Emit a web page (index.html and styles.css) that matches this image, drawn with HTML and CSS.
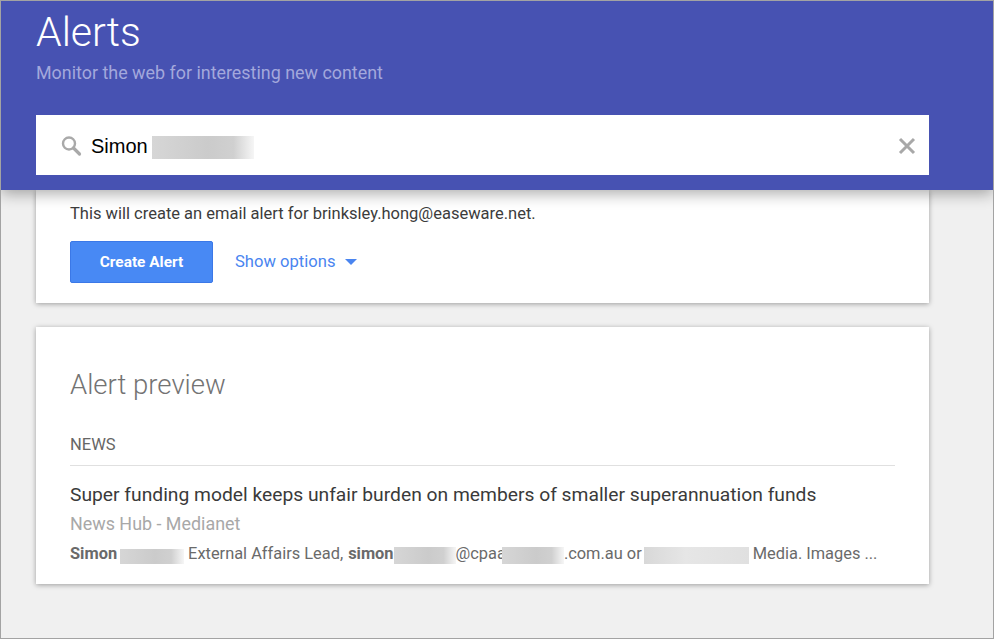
FILE: index.html
```html
<!DOCTYPE html>
<html lang="en">
<head>
<meta charset="utf-8">
<title>Alerts</title>
<link rel="stylesheet" href="styles.css">
</head>
<body>
<div class="window">
  <header class="header">
    <h1 class="title">Alerts</h1>
    <p class="subtitle">Monitor the web for interesting new content</p>
    <div class="search">
      <svg class="search-icon" width="22" height="22" viewBox="0 0 22 22" aria-hidden="true">
        <circle cx="9" cy="8.5" r="6" fill="none" stroke="#a9a9a9" stroke-width="2.4"/>
        <path d="M13.5 13l6 6" fill="none" stroke="#a9a9a9" stroke-width="3.2" stroke-linecap="round"/>
      </svg>
      <span class="query">Simon</span>
      <span class="redact redact-query"></span>
      <svg class="clear-icon" width="18" height="18" viewBox="0 0 18 18" aria-hidden="true">
        <path d="M2 2l14 14M16 2L2 16" fill="none" stroke="#a8a8a8" stroke-width="3"/>
      </svg>
    </div>
  </header>
  <main class="content">
    <section class="card card-create">
      <p class="notice">This will create an email alert for brinksley.hong@easeware.net.</p>
      <div class="actions">
        <button class="create-btn" type="button">Create Alert</button>
        <a class="options-link">Show options<span class="caret"></span></a>
      </div>
    </section>
    <section class="card card-preview">
      <h2 class="preview-title">Alert preview</h2>
      <div class="section-label">NEWS</div>
      <div class="headline">Super funding model keeps unfair burden on members of smaller superannuation funds</div>
      <div class="source">News Hub - Medianet</div>
      <div class="snippet"><b>Simon</b><span class="redact r1"></span><span class="t1">External Affairs Lead,</span><b class="b2">simon</b><span class="redact r2"></span><span>@cpaa</span><span class="redact r3"></span><span>.com.au or</span><span class="redact r4"></span><span>Media. Images ...</span></div>
    </section>
  </main>
</div>
</body>
</html>
```

FILE: styles.css
```css
* { box-sizing: border-box; }
html, body { margin: 0; padding: 0; }
body { font-family: Roboto, "Liberation Sans", sans-serif; background: #f0f0f0; }
.window {
  width: 994px;
  height: 639px;
  border: 1px solid #a3a3a3;
  background: #f0f0f0;
  overflow: hidden;
  position: relative;
}
.header {
  position: relative;
  z-index: 2;
  height: 189px;
  background: #4752b2;
  padding: 0 64px 0 35px;
  box-shadow: 0 4px 14px rgba(0, 0, 0, .32);
}
.title {
  margin: 0;
  padding-top: 8px;
  font-size: 41px;
  line-height: 46px;
  font-weight: 300;
  color: #fff;
}
.subtitle {
  margin: 6px 0 0;
  font-size: 17.9px;
  line-height: 24px;
  color: #a3a8dc;
}
.search {
  display: flex;
  align-items: center;
  height: 60px;
  width: 893px;
  margin-top: 30px;
  padding: 0 13px 0 24px;
  background: #fff;
}
.search-icon { flex: none; margin-top: 2px; }
.query {
  margin-left: 9px;
  padding-top: 2px;
  font-family: "Liberation Sans", Arial, sans-serif;
  font-size: 20px;
  color: #000;
}
.redact {
  display: inline-block;
  flex: none;
  background: linear-gradient(90deg, #d6d6d6, #cbcbcb 55%, #d0d0d0 80%, #f6f6f6);
}
.redact-query { width: 102px; height: 23px; margin: 5px 0 0 4px; }
.clear-icon { margin: 1px 0 0 auto; }
.content {
  width: 893px;
  margin-left: 35px;
}
.card {
  background: #fff;
  box-shadow: 0 1px 5px rgba(0, 0, 0, .35);
  padding-left: 34px;
  padding-right: 34px;
}
.card-create { height: 113px; padding-top: 14px; }
.notice {
  margin: 0;
  font-size: 16.5px;
  line-height: 20px;
  color: #3c3c3c;
}
.actions {
  display: flex;
  align-items: center;
  margin-top: 17px;
}
.create-btn {
  width: 143px;
  height: 42px;
  border: 1px solid #3b78e7;
  border-radius: 2px;
  background: #4889f4;
  color: #fff;
  font: 700 15.4px Roboto, sans-serif;
  padding: 0 0 1px;
}
.options-link {
  display: flex;
  align-items: center;
  margin: -2px 0 0 22px;
  font-size: 16.6px;
  color: #4a85f0;
}
.caret {
  width: 0;
  height: 0;
  margin: 2px 0 0 10px;
  border-left: 6px solid transparent;
  border-right: 6px solid transparent;
  border-top: 6px solid #4a85f0;
}
.card-preview { height: 257px; margin-top: 24px; padding-top: 41px; }
.preview-title {
  margin: 0;
  font-size: 27.5px;
  line-height: 34px;
  font-weight: 300;
  color: #737373;
}
.section-label {
  margin-top: 33px;
  padding-bottom: 10px;
  border-bottom: 1px solid #e0e0e0;
  font-size: 16.5px;
  line-height: 20px;
  color: #666;
}
.headline {
  margin-top: 17px;
  font-size: 19.25px;
  line-height: 24px;
  color: #3a3a3a;
  white-space: nowrap;
}
.source {
  margin-top: 5px;
  font-size: 17.9px;
  line-height: 24px;
  color: #a8a8a8;
}
.snippet {
  display: flex;
  align-items: center;
  margin-top: 8px;
  font-size: 16.4px;
  line-height: 20px;
  color: #6a6a6a;
  white-space: pre;
}
.snippet .redact { height: 17px; margin-top: 2px; }
.snippet .r1 { width: 64px; height: 15px; margin: 4px 4px 0 3px; }
.b2 { margin-left: 5px; }
.r2 { width: 62px; }
.snippet .r3 { width: 62px; margin-left: -4px; }
.snippet .r4 { width: 105px; margin: 2px 4px 0 2px; background: linear-gradient(90deg, #d8d8d8, #e6e6e6 40%, #e0e0e0); }
```
